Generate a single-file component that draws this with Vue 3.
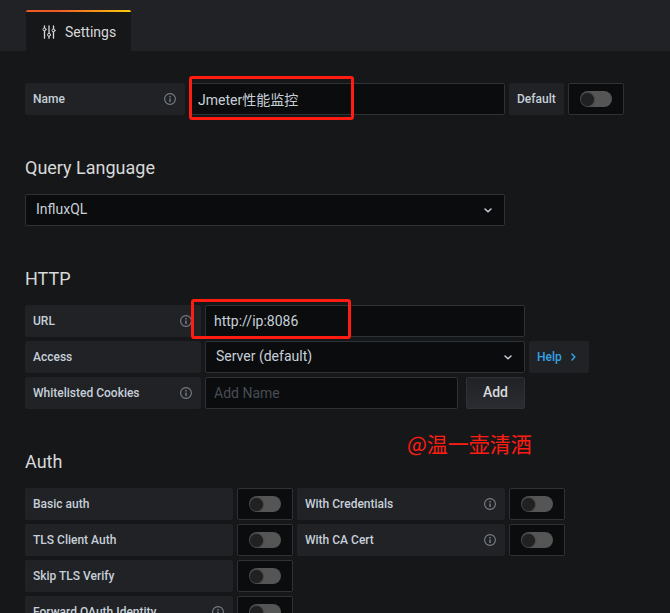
<script setup>
import { ref, reactive } from 'vue'

const name = ref('Jmeter性能监控')
const isDefault = ref(false)
const language = ref('InfluxQL')
const url = ref('http://ip:8086')
const access = ref('Server (default)')
const cookie = ref('')

const authRows = reactive([
  [
    { id: 'basic-auth', label: 'Basic auth', info: false, on: false },
    { id: 'with-credentials', label: 'With Credentials', info: true, on: false },
  ],
  [
    { id: 'tls-client-auth', label: 'TLS Client Auth', info: false, on: false },
    { id: 'with-ca-cert', label: 'With CA Cert', info: true, on: false },
  ],
  [{ id: 'skip-tls-verify', label: 'Skip TLS Verify', info: false, on: false }],
  [{ id: 'forward-oauth', label: 'Forward OAuth Identity', info: true, on: false }],
])
</script>

<template>
  <div class="page">
    <svg class="defs" aria-hidden="true">
      <symbol id="info" viewBox="0 0 14 14">
        <circle cx="7" cy="7" r="5.4" fill="none" stroke="currentColor" stroke-width="1.1" />
        <path d="M6.3 4h1.4v1.4h-1.4zM6.3 6.4h1.4v3.6h-1.4z" fill="currentColor" />
      </symbol>
      <symbol id="chevron" viewBox="0 0 16 16">
        <path d="M5 7 8 9.8 11 7" fill="none" stroke="currentColor" stroke-width="1.5" stroke-linecap="round" stroke-linejoin="round" />
      </symbol>
    </svg>

    <header class="header">
      <nav class="tabs">
        <a class="tab" href="#settings">
          <svg class="tab-icon" viewBox="0 0 14 14" fill="none" stroke="currentColor" stroke-linecap="round">
            <path d="M2.5 .8v2M2.5 6v7.2M7 .8v7.4M7 11.4v1.8M11.5 .8v3M11.5 7v6.2" stroke-width="1.3" />
            <circle cx="2.5" cy="4.4" r="1.5" />
            <circle cx="7" cy="9.8" r="1.5" />
            <circle cx="11.5" cy="5.4" r="1.5" />
          </svg>
          Settings
        </a>
      </nav>
    </header>

    <main class="content">
      <section class="group">
        <div class="row">
          <label class="label label-name" for="name">Name<svg class="info"><use href="#info" /></svg></label>
          <div class="field field-name">
            <input id="name" v-model="name" class="input" type="text" />
            <span class="mark mark-name"></span>
          </div>
          <div class="default">
            <label class="label" for="default">Default</label>
            <span class="switch">
              <input id="default" v-model="isDefault" class="toggle" type="checkbox" />
            </span>
          </div>
        </div>
      </section>

      <section class="group">
        <h3 class="title"><label for="language">Query Language</label></h3>
        <div class="select-box select-language">
          <select id="language" v-model="language" class="input select">
            <option>InfluxQL</option>
            <option>Flux</option>
          </select>
          <svg class="chevron"><use href="#chevron" /></svg>
        </div>
      </section>

      <section class="group">
        <h3 class="title">HTTP</h3>
        <div class="rows">
          <div class="row">
            <label class="label label-http" for="url">URL<svg class="info"><use href="#info" /></svg></label>
            <div class="field field-http">
              <input id="url" v-model="url" class="input" type="text" />
              <span class="mark mark-url"></span>
            </div>
          </div>
          <div class="row">
            <label class="label label-http" for="access">Access</label>
            <div class="select-box field-http">
              <select id="access" v-model="access" class="input select">
                <option>Server (default)</option>
                <option>Browser</option>
              </select>
              <svg class="chevron"><use href="#chevron" /></svg>
            </div>
            <button class="label help" type="button">Help<svg class="help-icon"><use href="#chevron" /></svg></button>
          </div>
          <div class="row">
            <label class="label label-http" for="cookies">Whitelisted Cookies<svg class="info"><use href="#info" /></svg></label>
            <div class="field-http cookies">
              <input id="cookies" v-model="cookie" class="input" type="text" placeholder="Add Name" />
              <button class="add" type="button">Add</button>
            </div>
          </div>
        </div>
      </section>

      <section class="group">
        <h3 class="title">Auth</h3>
        <div class="rows">
          <div v-for="(row, i) in authRows" :key="i" class="row">
            <template v-for="item in row" :key="item.id">
              <label class="label label-auth" :for="item.id">{{ item.label }}<svg v-if="item.info" class="info"><use href="#info" /></svg></label>
              <span class="switch">
                <input :id="item.id" v-model="item.on" class="toggle" type="checkbox" />
              </span>
            </template>
          </div>
        </div>
      </section>
    </main>

    <span class="signature">@温一壶清酒</span>
  </div>
</template>

<style>
body {
  background: #161719;
}
</style>

<style scoped>
.page {
  position: relative;
  height: 100vh;
  overflow: hidden;
  background: #161719;
  color: #c7d0d9;
  font-family: Roboto, "Noto Sans CJK SC", sans-serif;
  font-size: 14px;
  line-height: 20px;
}
.page *,
.page {
  box-sizing: border-box;
}
.defs {
  position: absolute;
  width: 0;
  height: 0;
}
.header {
  padding: 10px 26px 0;
  background: #202226;
}
.tabs {
  display: flex;
}
.tab {
  display: flex;
  align-items: center;
  gap: 9px;
  height: 41px;
  padding: 2px 15px 0 16px;
  border-radius: 2px 2px 0 0;
  background: linear-gradient(to right, #f05a28 30%, #fbca0a 99%) top / 100% 2px no-repeat, #161719;
  color: #d8d9da;
  text-decoration: none;
}
.tab-icon {
  width: 14px;
  height: 14px;
}
.content {
  display: flex;
  flex-direction: column;
  gap: 40px;
  padding: 32px 25px 0;
}
.title {
  margin: 0 0 14px;
  font-size: 18px;
  font-weight: 400;
  line-height: 25px;
  color: #d8d9da;
}
.rows {
  display: flex;
  flex-direction: column;
  gap: 4px;
}
.row,
.default {
  display: flex;
  gap: 4px;
}
.label {
  display: flex;
  flex-shrink: 0;
  align-items: center;
  justify-content: space-between;
  height: 32px;
  padding: 0 8px;
  border: 0;
  border-radius: 2px;
  background: #202226;
  color: #c7d0d9;
  font-family: inherit;
  font-size: 12px;
  font-weight: 500;
}
.label-name {
  width: 160px;
}
.label-http {
  width: 176px;
}
.label-auth {
  width: 208px;
}
.info {
  width: 14px;
  height: 14px;
  color: #7b8087;
}
.field {
  position: relative;
}
.field-name {
  width: 316px;
}
.field-http {
  width: 320px;
}
.input {
  width: 100%;
  min-width: 0;
  height: 32px;
  margin: 0;
  padding: 0 8px;
  border: 1px solid #2c3235;
  border-radius: 2px;
  outline: 0;
  background: #0b0c0e;
  color: #c7d0d9;
  font-family: inherit;
  font-size: 14px;
}
.input::placeholder {
  color: #464c54;
  opacity: 1;
}
.select-box {
  display: grid;
  align-items: center;
}
.select-box > * {
  grid-area: 1 / 1;
}
.select-language {
  width: 480px;
}
.select {
  padding: 0 10px 2px;
  appearance: none;
}
.chevron {
  width: 16px;
  height: 16px;
  margin-right: 9px;
  justify-self: end;
  pointer-events: none;
}
.help {
  gap: 3px;
  color: #33a2e5;
}
.help-icon {
  width: 16px;
  height: 16px;
  transform: rotate(-90deg);
}
.cookies {
  display: flex;
  gap: 8px;
}
.add {
  flex-shrink: 0;
  height: 32px;
  padding: 0 16px 2px;
  border: 1px solid #2c3235;
  border-radius: 2px;
  background: linear-gradient(#202226, #2a2c31);
  color: #d8d9da;
  font-family: inherit;
  font-size: 14px;
  font-weight: 500;
}
.switch {
  display: flex;
  flex-shrink: 0;
  align-items: center;
  justify-content: center;
  width: 56px;
  height: 32px;
  border: 1px solid #2c3235;
  border-radius: 2px;
  background: #0b0c0e;
}
.toggle {
  display: flex;
  align-items: center;
  width: 32px;
  height: 16px;
  margin: 0;
  padding: 0 1px;
  border-radius: 8px;
  background: #555;
  appearance: none;
}
.toggle::before {
  content: "";
  width: 13px;
  height: 13px;
  border-radius: 50%;
  background: #202123;
  box-shadow: 0 0 2px #202123;
}
.toggle:checked {
  justify-content: flex-end;
  background: #33a2e5;
}
.mark {
  position: absolute;
  border: 3px solid #ff1c12;
  border-radius: 3px;
  pointer-events: none;
}
.mark-name {
  top: -7px;
  left: 0;
  width: 165px;
  height: 44px;
}
.mark-url {
  top: -6px;
  left: -14px;
  width: 160px;
  height: 40px;
}
.signature {
  position: absolute;
  top: 428px;
  left: 407px;
  color: #ff1c12;
  font-family: "Noto Sans CJK SC", sans-serif;
  font-size: 21px;
  font-weight: 400;
  line-height: 30px;
}
</style>
